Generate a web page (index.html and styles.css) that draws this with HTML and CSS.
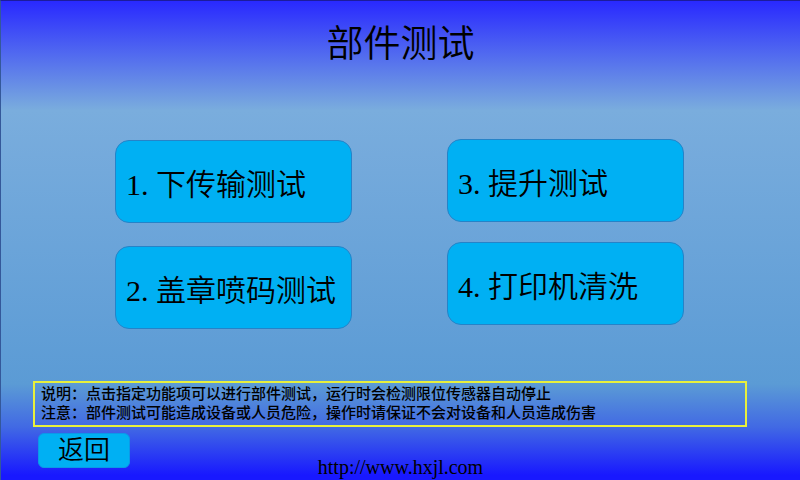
FILE: index.html
```html
<!DOCTYPE html>
<html lang="zh-CN">
<head>
<meta charset="utf-8">
<meta name="viewport" content="width=device-width, initial-scale=1">
<title>部件测试</title>
<link rel="stylesheet" href="styles.css">
</head>
<body>
<header class="header">
  <h1 class="title">部件测试</h1>
</header>
<main class="main">
  <div class="tests">
    <div class="column column-left">
      <button class="test" type="button">1. 下传输测试</button>
      <button class="test" type="button">2. 盖章喷码测试</button>
    </div>
    <div class="column column-right">
      <button class="test" type="button">3. 提升测试</button>
      <button class="test" type="button">4. 打印机清洗</button>
    </div>
  </div>
  <section class="notes">
    <p>说明：点击指定功能项可以进行部件测试，运行时会检测限位传感器自动停止</p>
    <p>注意：部件测试可能造成设备或人员危险，操作时请保证不会对设备和人员造成伤害</p>
  </section>
</main>
<footer class="footer">
  <button class="back" type="button">返回</button>
  <a class="site" href="http://www.hxjl.com">http://www.hxjl.com</a>
</footer>
</body>
</html>
```

FILE: styles.css
```css
* {
  box-sizing: border-box;
}

body {
  margin: 0;
  min-height: 100vh;
  display: flex;
  flex-direction: column;
  border-top: 1px solid #1c1c9c;
  border-left: 1px solid #34589a;
  background: linear-gradient(#2828ff 0%, #5068f0 11%, #7aaddd 23%, #5b9bd5 80%, #4169e4 89%, #1818ff 99%);
  color: #000;
  font-family: "Liberation Serif", "Noto Sans CJK SC", serif;
}

button {
  border: 1px solid #2583c8;
  background: #00b0f3;
  color: inherit;
  font-family: inherit;
  font-weight: 350;
}

.header {
  padding-top: 20px;
  text-align: center;
}

.title {
  margin: 0;
  font-size: 37px;
  line-height: 48px;
  font-weight: 350;
}

.main {
  flex: 1;
}

.tests {
  display: grid;
  grid-template-columns: 1fr 1fr;
  gap: 95px;
  padding: 70px 116px 0 114px;
}

.column {
  display: flex;
  flex-direction: column;
}

.column-left {
  padding-top: 1px;
  gap: 23px;
}

.column-right {
  gap: 20px;
}

.test {
  height: 83px;
  padding: 6px 10px 0;
  border-radius: 14px;
  font-size: 30px;
  line-height: 40px;
  text-align: left;
  white-space: nowrap;
}

.notes {
  margin: 52px 53px 0 32px;
  padding: 2px 6px;
  border: 2px solid #e8f03c;
  font-size: 15px;
  line-height: 19px;
  font-weight: 500;
}

.notes p {
  margin: 0;
}

.footer {
  display: grid;
  grid-template-columns: 1fr auto 1fr;
  align-items: end;
  padding: 0 37px 2px;
}

.back {
  justify-self: start;
  width: 92px;
  height: 35px;
  margin-bottom: 10px;
  padding: 0;
  border-color: #0c98e8;
  border-radius: 6px;
  font-size: 26px;
  line-height: 33px;
}

.site {
  color: inherit;
  font-size: 20px;
  line-height: 22px;
  text-decoration: none;
}
```
